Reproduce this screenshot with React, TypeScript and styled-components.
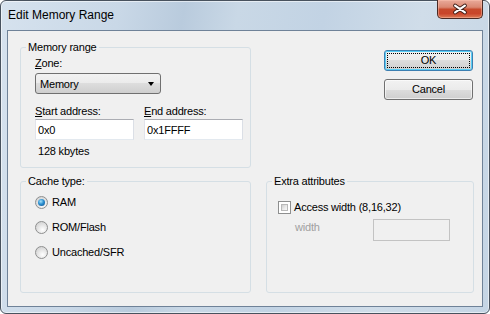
import React from "react";
import styled, { createGlobalStyle } from "styled-components";

const GlobalStyle = createGlobalStyle`
    html, body {
        margin: 0;
        padding: 0;
    }
    body {
        width: 490px;
        height: 314px;
        overflow: hidden;
        font-family: "Liberation Sans", Arial, sans-serif;
        font-size: 11px;
        color: #000;
    }
    * {
        box-sizing: border-box;
    }
`;

export default function App() {
    return (
        <>
            <GlobalStyle />
            <Window>
                <TitleBar>
                    <Title>Edit Memory Range</Title>
                    <CloseButton aria-label="Close">
                        <svg width="45" height="19" viewBox="0 0 45 19">
                            <path d="M17.5 5.5 L27.5 12.5 M27.5 5.5 L17.5 12.5" stroke="#3a1a14" strokeWidth="4" strokeLinecap="round" fill="none" />
                            <path d="M17.5 5.5 L27.5 12.5 M27.5 5.5 L17.5 12.5" stroke="#fff" strokeWidth="2.2" strokeLinecap="round" fill="none" />
                        </svg>
                    </CloseButton>
                </TitleBar>
                <Client>
                    <Layout>
                        <GroupBox>
                            <Legend>Memory range</Legend>
                            <GroupBody $left={14}>
                                <Label $top={3}><u>Z</u>one:</Label>
                                <Combo>
                                    <span>Memory</span>
                                    <ComboArrow />
                                </Combo>
                                <FieldRow>
                                    <Field>
                                        <Label><u>S</u>tart address:</Label>
                                        <TextBox defaultValue="0x0" />
                                    </Field>
                                    <Field>
                                        <Label><u>E</u>nd address:</Label>
                                        <TextBox defaultValue="0x1FFFF" />
                                    </Field>
                                </FieldRow>
                                <SizeNote>128 kbytes</SizeNote>
                            </GroupBody>
                        </GroupBox>

                        <ButtonStack>
                            <PushButton $default>OK</PushButton>
                            <PushButton>Cancel</PushButton>
                        </ButtonStack>

                        <GroupBox>
                            <Legend>Cache type:</Legend>
                            <GroupBody $left={14}>
                                <RadioList>
                                    <Option><Radio $checked /><span>RAM</span></Option>
                                    <Option><Radio /><span>ROM/Flash</span></Option>
                                    <Option><Radio /><span>Uncached/SFR</span></Option>
                                </RadioList>
                            </GroupBody>
                        </GroupBox>

                        <GroupBox>
                            <Legend>Extra attributes</Legend>
                            <GroupBody $left={11}>
                                <CheckRow>
                                    <CheckBox />
                                    <span>Access width (8,16,32)</span>
                                </CheckRow>
                                <WidthRow>
                                    <DisabledLabel>width</DisabledLabel>
                                    <DisabledBox />
                                </WidthRow>
                            </GroupBody>
                        </GroupBox>
                    </Layout>
                </Client>
            </Window>
        </>
    );
}

const Window = styled.div`
    width: 490px;
    height: 314px;
    display: flex;
    flex-direction: column;
    padding: 0 6px 6px;
    border: 1px solid #48525e;
    border-radius: 6px;
    background: linear-gradient(100deg, #d6e2ee 0%, #c9d8e7 22%, #b9cbdd 34%, #c9d8e6 44%, #c2d3e4 60%, #d0dde9 78%, #c5d5e5 100%);
    box-shadow: inset 0 0 0 1px rgba(255, 255, 255, 0.55);
`;

const TitleBar = styled.div`
    height: 29px;
    display: flex;
    justify-content: space-between;
    align-items: flex-start;
    padding-left: 1px;
`;

const Title = styled.div`
    font-size: 12px;
    line-height: 14px;
    margin-top: 7px;
    color: #000;
`;

const CloseButton = styled.div`
    width: 46px;
    height: 19px;
    margin-top: -1px;
    border: 1px solid #4a2a24;
    border-top: none;
    border-radius: 0 0 5px 5px;
    background: linear-gradient(#e9aa9a 0%, #da8872 40%, #c74a2c 52%, #c9452a 75%, #dc7a55 100%);
    box-shadow: inset 0 0 0 1px rgba(255, 200, 180, 0.45);
    display: flex;

    svg {
        display: block;
    }
`;

const Client = styled.div`
    flex: 1;
    border: 1px solid #6f8298;
    background: #f0f0f0;
    letter-spacing: -0.2px;
`;

const Layout = styled.div`
    display: grid;
    grid-template-columns: 231px 208px;
    grid-template-rows: 127px 118px;
    column-gap: 15px;
    row-gap: 7px;
    padding: 10px 8px 0 12px;
`;

const GroupBox = styled.fieldset`
    margin: 0;
    padding: 0;
    min-width: 0;
    border: 1px solid #d5dfe5;
    border-radius: 3px;
`;

const Legend = styled.legend`
    margin-left: 5px;
    padding: 0 2px;
    line-height: 13px;
`;

const GroupBody = styled.div<{ $left: number }>`
    display: flex;
    flex-direction: column;
    align-items: flex-start;
    padding: 0 8px 0 ${p => p.$left}px;
`;

const Label = styled.label<{ $top?: number }>`
    display: block;
    line-height: 13px;
    margin-top: ${p => p.$top ?? 0}px;
`;

const Combo = styled.div`
    margin-top: 3px;
    width: 126px;
    height: 21px;
    border: 1px solid #707070;
    border-radius: 3px;
    background: linear-gradient(#f2f2f2 0%, #ebebeb 50%, #dddddd 50%, #cfcfcf 100%);
    display: flex;
    align-items: center;
    justify-content: space-between;
    padding: 0 6px 0 4px;
`;

const ComboArrow = styled.span`
    width: 0;
    height: 0;
    border-left: 3.5px solid transparent;
    border-right: 3.5px solid transparent;
    border-top: 4px solid #000;
`;

const FieldRow = styled.div`
    margin-top: 11px;
    display: flex;
    gap: 10px;
`;

const Field = styled.div`
    display: flex;
    flex-direction: column;
    gap: 1px;
`;

const TextBox = styled.input`
    width: 99px;
    height: 21px;
    margin: 0;
    padding: 0 2px;
    border: 1px solid;
    border-color: #abadb3 #dbdfe6 #e3e9ef #e2e3ea;
    background: #fff;
    font: inherit;
    letter-spacing: inherit;
    color: #000;
    outline: none;
`;

const SizeNote = styled.div`
    margin-top: 5px;
    padding-left: 3px;
    line-height: 13px;
`;

const ButtonStack = styled.div`
    display: flex;
    flex-direction: column;
    align-items: flex-end;
    gap: 8px;
    padding: 9px 1px 0 0;
`;

const PushButton = styled.div<{ $default?: boolean }>`
    position: relative;
    width: 89px;
    height: 21px;
    border: 1px solid ${p => (p.$default ? "#3c7fb1" : "#707070")};
    border-radius: 3px;
    background: linear-gradient(#f2f2f2 0%, #ebebeb 50%, #dddddd 50%, #cfcfcf 100%);
    box-shadow: ${p => (p.$default ? "inset 0 0 0 1px #58cdf5" : "inset 0 0 0 1px rgba(255,255,255,0.6)")};
    display: flex;
    align-items: center;
    justify-content: center;
    line-height: 13px;

    &::after {
        content: "";
        display: ${p => (p.$default ? "block" : "none")};
        position: absolute;
        inset: 2px;
        border: 1px dotted #000;
    }
`;

const RadioList = styled.div`
    margin-top: 8px;
    display: flex;
    flex-direction: column;
    gap: 12px;
`;

const Option = styled.div`
    height: 13px;
    display: flex;
    align-items: center;
    gap: 4px;
    line-height: 13px;
`;

const Radio = styled.span<{ $checked?: boolean }>`
    width: 13px;
    height: 13px;
    border-radius: 50%;
    border: 1px solid #8e8f8f;
    background: radial-gradient(circle at 60% 70%, #ffffff 0%, #e6e6e6 45%, #c9c9c9 100%);
    display: flex;
    align-items: center;
    justify-content: center;

    &::before {
        content: "";
        display: ${p => (p.$checked ? "block" : "none")};
        width: 7px;
        height: 7px;
        border-radius: 50%;
        background: radial-gradient(circle at 40% 35%, #a6e2fb 0%, #2b8fd0 45%, #0f4c86 100%);
    }
`;

const CheckRow = styled.div`
    margin-top: 13px;
    height: 13px;
    display: flex;
    align-items: center;
    gap: 3px;
    line-height: 13px;
`;

const CheckBox = styled.span`
    width: 13px;
    height: 13px;
    border: 1px solid #8e8f8f;
    background: #fff;
    padding: 2px;
    display: flex;

    &::before {
        content: "";
        flex: 1;
        border: 1px solid #b9b9b9;
        background: linear-gradient(135deg, #cfcfcf 0%, #ececec 60%, #f8f8f8 100%);
    }
`;

const WidthRow = styled.div`
    margin-top: 5px;
    padding-left: 17px;
    display: flex;
    align-items: flex-start;
`;

const DisabledLabel = styled.span`
    width: 78px;
    padding-top: 2px;
    line-height: 13px;
    color: #a0a0a0;
`;

const DisabledBox = styled.div`
    width: 77px;
    height: 22px;
    border: 1px solid #c3c3c3;
    background: #f0f0f0;
`;
